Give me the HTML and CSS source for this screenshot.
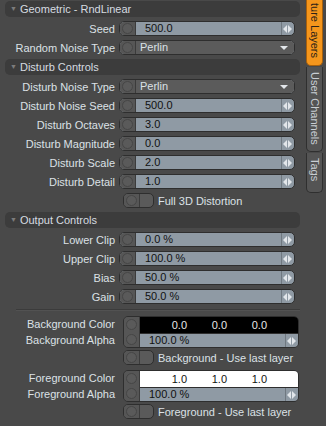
FILE: index.html
```html
<!DOCTYPE html>
<html lang="en">
<head>
  <meta charset="utf-8">
  <title>Texture Layers</title>
  <link rel="stylesheet" href="styles.css">
</head>
<body>

  <div class="panel">

    <div class="group">▼ <span>Geometric - RndLinear</span></div>
    <div class="row"><div class="label">Seed</div><div class="ctl"><i class="knob"></i><div class="val">500.0</div><div class="arr"></div></div></div>
    <div class="row"><div class="label">Random Noise Type</div><div class="ctl"><i class="knob"></i><div class="pop">Perlin</div></div></div>

    <div class="group">▼ <span>Disturb Controls</span></div>
    <div class="row"><div class="label">Disturb Noise Type</div><div class="ctl"><i class="knob"></i><div class="pop">Perlin</div></div></div>
    <div class="row"><div class="label">Disturb Noise Seed</div><div class="ctl"><i class="knob"></i><div class="val">500.0</div><div class="arr"></div></div></div>
    <div class="row"><div class="label">Disturb Octaves</div><div class="ctl"><i class="knob"></i><div class="val">3.0</div><div class="arr"></div></div></div>
    <div class="row"><div class="label">Disturb Magnitude</div><div class="ctl"><i class="knob"></i><div class="val">0.0</div><div class="arr"></div></div></div>
    <div class="row"><div class="label">Disturb Scale</div><div class="ctl"><i class="knob"></i><div class="val">2.0</div><div class="arr"></div></div></div>
    <div class="row"><div class="label">Disturb Detail</div><div class="ctl"><i class="knob"></i><div class="val">1.0</div><div class="arr"></div></div></div>
    <div class="row"><div class="label"></div><div class="check"><i class="knob"></i><b></b></div><div class="chk-text">Full 3D Distortion</div></div>

    <div class="group">▼ <span>Output Controls</span></div>
    <div class="row"><div class="label">Lower Clip</div><div class="ctl"><i class="knob"></i><div class="val">0.0 %</div><div class="arr"></div></div></div>
    <div class="row"><div class="label">Upper Clip</div><div class="ctl"><i class="knob"></i><div class="val">100.0 %</div><div class="arr"></div></div></div>
    <div class="row"><div class="label">Bias</div><div class="ctl"><i class="knob"></i><div class="val">50.0 %</div><div class="arr"></div></div></div>
    <div class="row"><div class="label">Gain</div><div class="ctl"><i class="knob"></i><div class="val">50.0 %</div><div class="arr"></div></div></div>

    <div class="sep"></div>

    <div class="pair">
      <div class="pair-labels">
        <div class="label">Background Color</div>
        <div class="label">Background Alpha</div>
      </div>
      <div class="pair-ctl">
        <div class="knobs"><i class="knob"></i><i class="knob"></i></div>
        <div class="pair-fields">
          <div class="color dark"><span>0.0</span><span>0.0</span><span>0.0</span></div>
          <div class="alpha"><div class="val">100.0 %</div><div class="arr"></div></div>
        </div>
      </div>
    </div>
    <div class="row"><div class="label"></div><div class="check"><i class="knob"></i><b></b></div><div class="chk-text">Background - Use last layer</div></div>

    <div class="pair">
      <div class="pair-labels">
        <div class="label">Foreground Color</div>
        <div class="label">Foreground Alpha</div>
      </div>
      <div class="pair-ctl">
        <div class="knobs"><i class="knob"></i><i class="knob"></i></div>
        <div class="pair-fields">
          <div class="color light"><span>1.0</span><span>1.0</span><span>1.0</span></div>
          <div class="alpha"><div class="val">100.0 %</div><div class="arr"></div></div>
        </div>
      </div>
    </div>
    <div class="row"><div class="label"></div><div class="check"><i class="knob"></i><b></b></div><div class="chk-text">Foreground - Use last layer</div></div>

  </div>

  <div class="tabs">
    <div class="tab on"><span>ture Layers</span></div>
    <div class="tab mid"><span>User Channels</span></div>
    <div class="tab last"><span>Tags</span></div>
  </div>

</body>
</html>
```

FILE: styles.css
```css
html, body {
    margin: 0;
    height: 100%;
}

body {
    display: flex;
    background: #494949;
    font-family: "Liberation Sans", Arial, sans-serif;
    font-size: 11px;
    color: #dce1e6;
    overflow: hidden;
}

.panel {
    width: 303px;
    padding-top: 1px;
}

.group {
    height: 16px;
    margin: 0 3px 2px 5px;
    padding-left: 5px;
    border-radius: 5px;
    background: #3c3c3c;
    color: #7c7c7c;
    font-size: 7px;
    line-height: 16px;
    display: flex;
    align-items: center;
}

.group span {
    font-size: 11px;
    color: #d6dbe0;
    margin-left: 3px;
}

.row + .group {
    margin-top: 2px;
}

.row {
    height: 19px;
    display: flex;
    align-items: center;
}

.label {
    width: 119px;
    padding-right: 4px;
    box-sizing: border-box;
    text-align: right;
    white-space: nowrap;
    flex: none;
}

.ctl {
    width: 176px;
    height: 15px;
    display: flex;
    border: 1px solid #2e2e2e;
    border-radius: 5px;
    overflow: hidden;
    box-sizing: border-box;
    background: #8f9aa4;
}

.knob {
    width: 15px;
    flex: none;
    background: #565656;
    border-right: 1px solid #3b3b3b;
    display: flex;
    align-items: center;
    justify-content: center;
}

.knob::after {
    content: "";
    width: 9px;
    height: 9px;
    border-radius: 50%;
    border: 1px solid #464646;
    background: #5a5a5a;
}

.val {
    flex: 1;
    padding-left: 9px;
    color: #111;
    line-height: 13px;
}

.arr {
    width: 12px;
    flex: none;
    border-left: 1px solid #6f7880;
    position: relative;
}

.arr::before, .arr::after {
    content: "";
    position: absolute;
    top: 3px;
    border-top: 4px solid transparent;
    border-bottom: 4px solid transparent;
}

.arr::before {
    left: 1px;
    border-right: 4px solid #e2e6ea;
}

.arr::after {
    left: 6px;
    border-left: 4px solid #e2e6ea;
}

.pop {
    flex: 1;
    background: #5b5b5b;
    padding-left: 4px;
    line-height: 13px;
    color: #dce1e6;
    position: relative;
}

.pop::after {
    content: "";
    position: absolute;
    right: 6px;
    top: 5px;
    border-left: 4px solid transparent;
    border-right: 4px solid transparent;
    border-top: 4px solid #e2e6ea;
}

.check {
    margin-left: 4px;
    width: 31px;
    height: 15px;
    box-sizing: border-box;
    display: flex;
    border: 1px solid #2e2e2e;
    border-radius: 5px;
    overflow: hidden;
    background: #5a5a5a;
}

.check b {
    flex: 1;
}

.chk-text {
    margin-left: 4px;
    white-space: nowrap;
}

.sep {
    height: 1px;
    margin: 3px 3px 5px 16px;
    background: #3b3b3b;
    border-bottom: 1px solid #525252;
}

.pair {
    display: flex;
    height: 32px;
}

.row + .pair {
    margin-top: 3px;
}

.pair-labels .label {
    height: 16px;
    line-height: 16px;
}

.pair-ctl {
    margin-left: 4px;
    width: 176px;
    display: flex;
    border: 1px solid #2e2e2e;
    border-radius: 5px;
    overflow: hidden;
    box-sizing: border-box;
}

.knobs {
    display: flex;
    flex-direction: column;
}

.knobs .knob {
    flex: 1;
}

.pair-fields {
    flex: 1;
    display: flex;
    flex-direction: column;
}

.color {
    height: 16px;
    display: flex;
    padding-left: 7px;
    line-height: 16px;
}

.color span {
    width: 40px;
    text-align: right;
}

.dark {
    background: #000;
    color: #e8e8e8;
}

.light {
    background: #fff;
    color: #111;
}

.alpha {
    flex: 1;
    display: flex;
    background: #8f9aa4;
    border-top: 1px solid #2e2e2e;
}

.tabs {
    padding-left: 3px;
    display: flex;
    flex-direction: column;
}

.tab {
    width: 15px;
    display: flex;
    flex-direction: column;
    justify-content: flex-end;
    overflow: hidden;
    border: 1px solid #2f2f2f;
    border-top: none;
    border-radius: 0 0 5px 5px;
    background: #545454;
    color: #c9ced3;
    margin-bottom: 1px;
}

.tab span {
    writing-mode: vertical-rl;
    white-space: nowrap;
    line-height: 15px;
    padding: 5px 0 7px;
}

.tab.on {
    height: 65px;
    background: #f5961c;
    color: #2a2118;
    border-color: #a8600c;
}

.tab.mid {
    height: 84px;
    justify-content: flex-start;
}

.tab.last {
    height: 39px;
    justify-content: flex-start;
}
```
